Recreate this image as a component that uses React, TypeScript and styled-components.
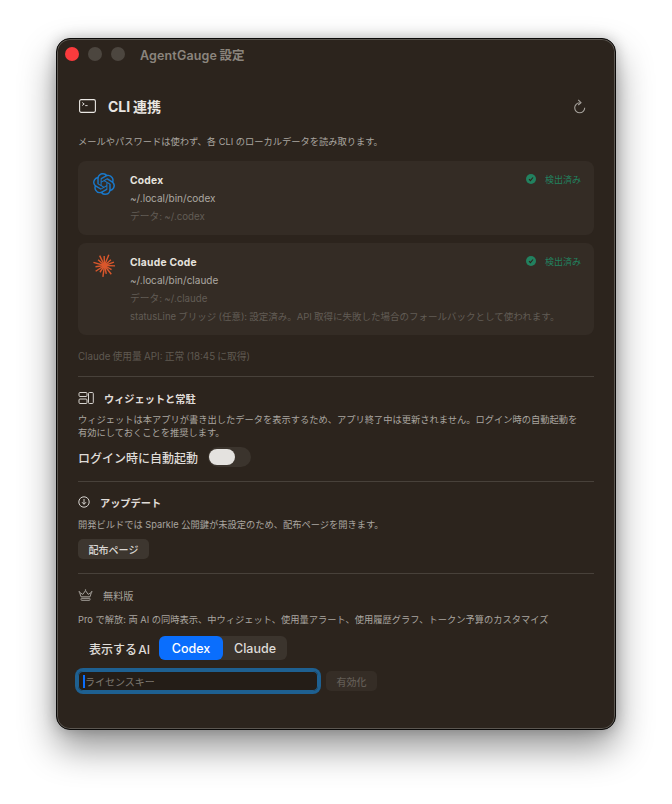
import { createGlobalStyle, styled } from "styled-components";
import { SiOpenai } from "react-icons/si";

const GlobalStyle = createGlobalStyle`
  html, body {
    margin: 0;
    padding: 0;
    background: #ffffff;
  }
  body {
    font-family: "Inter", "Noto Sans CJK JP", sans-serif;
    -webkit-font-smoothing: antialiased;
  }
`;

const Page = styled.div`
  width: 672px;
  height: 804px;
  padding: 38px 0 0 56px;
  box-sizing: border-box;
  overflow: hidden;
`;

const Window = styled.div`
  width: 560px;
  height: 692px;
  box-sizing: border-box;
  background: #2c241d;
  border-radius: 14px;
  border: 1px solid #0b0a09;
  box-shadow: inset 0 0 0 1px #5c5751, 0 18px 36px rgba(0, 0, 0, 0.42), 0 0 14px rgba(0, 0, 0, 0.22);
`;

const TitleBar = styled.div`
  display: flex;
  align-items: center;
  height: 30px;
  padding-left: 8px;
`;

const Light = styled.span<{ $color: string }>`
  width: 14px;
  height: 14px;
  border-radius: 50%;
  background: ${(p) => p.$color};
  margin-right: 9px;
`;

const WindowTitle = styled.span`
  margin-left: 6px;
  font-size: 12.5px;
  font-weight: 600;
  word-spacing: -1px;
  letter-spacing: 0.15px;
  color: #8b857d;
`;

const Content = styled.div`
  padding: 25px 21px 0 21px;
`;

const MainHead = styled.div`
  display: flex;
  align-items: center;
  height: 24px;
  padding-left: 1px;
  color: #ebe8e4;
`;

const MainTitle = styled.h1`
  margin: 0 0 0 12px;
  font-size: 14px;
  font-weight: 700;
  word-spacing: -0.5px;
  color: #e8e5e1;
  flex: 1;
`;

const RefreshBtn = styled.span`
  display: flex;
  margin-right: 7px;
  color: #a5a19b;
`;

const Desc = styled.p<{ $mt?: number }>`
  margin: ${(p) => p.$mt ?? 0}px 0 0;
  font-size: 9.25px;
  line-height: 13px;
  white-space: nowrap;
  color: #aaa6a0;
`;

const CardList = styled.div`
  display: flex;
  flex-direction: column;
  gap: 8px;
  margin-top: 13px;
`;

const Card = styled.div`
  position: relative;
  display: flex;
  background: #342c25;
  border-radius: 8px;
  padding: 10px 13px 10px 15px;
`;

const CardLogo = styled.div<{ $top: number }>`
  width: 37px;
  flex: none;
  padding-top: ${(p) => p.$top}px;
`;

const CardBody = styled.div`
  flex: 1;
`;

const CardName = styled.div`
  font-size: 10.25px;
  font-weight: 700;
  line-height: 18px;
  letter-spacing: 0.25px;
  color: #e6e3df;
`;

const CardPath = styled.div`
  font-size: 10px;
  line-height: 18px;
  color: #aca8a2;
`;

const CardMuted = styled.div<{ $small?: boolean }>`
  padding-top: 1px;
  margin-bottom: -1px;
  font-size: ${(p) => (p.$small ? 9.5 : 9.75)}px;
  line-height: 18px;
  word-spacing: -0.5px;
  white-space: nowrap;
  color: #625c55;
`;

const Status = styled.div`
  position: absolute;
  top: 10px;
  right: 13px;
  display: flex;
  align-items: flex-start;
  gap: 9px;
  font-size: 9px;
  line-height: 18px;
  color: #22815f;
`;

const Check = styled.svg`
  margin-top: 3px;
`;

const ApiNote = styled.div`
  padding-top: 1px;
  margin: 13px 0 -1px;
  font-size: 9.75px;
  line-height: 16px;
  word-spacing: -0.5px;
  color: #5f5951;
`;

const Divider = styled.hr<{ $mt: number }>`
  margin: ${(p) => p.$mt}px 0 0;
  border: 0;
  height: 1px;
  background: #48413a;
`;

const SectionHead = styled.div<{ $gap: number; $mt: number }>`
  display: flex;
  align-items: center;
  gap: ${(p) => p.$gap}px;
  height: 18px;
  margin-top: ${(p) => p.$mt}px;
  color: #d6d3cf;
`;

const SectionTitle = styled.h2<{ $dim?: boolean }>`
  margin: 0;
  font-size: 10.2px;
  font-weight: ${(p) => (p.$dim ? 400 : 700)};
  color: ${(p) => (p.$dim ? "#a5a19b" : "#e0ddd9")};
`;

const ToggleRow = styled.div`
  display: flex;
  align-items: center;
  gap: 10px;
  margin-top: 8px;
  height: 20px;
  font-size: 12px;
  font-weight: 500;
  color: #dfdcd8;
`;

const Toggle = styled.span`
  display: flex;
  align-items: center;
  width: 43px;
  height: 20px;
  padding-left: 1px;
  box-sizing: border-box;
  border-radius: 10px;
  background: #3b342d;
`;

const Knob = styled.span`
  width: 26px;
  height: 16px;
  border-radius: 8px;
  background: #e4e2df;
`;

const PlainButton = styled.button`
  display: block;
  margin-top: 8px;
  height: 20px;
  width: 71px;
  padding: 0;
  border: 0;
  border-radius: 5px;
  background: #3d362f;
  color: #dcd9d5;
  font-family: inherit;
  font-size: 10px;
  font-weight: 500;
`;

const PickerRow = styled.div`
  display: flex;
  align-items: center;
  margin-top: 10px;
  padding-left: 11px;
  height: 24px;
`;

const PickerLabel = styled.span`
  width: 70px;
  font-size: 12px;
  font-weight: 500;
  word-spacing: -2px;
  color: #dfdcd8;
`;

const Segments = styled.div`
  display: flex;
  height: 24px;
  width: 128px;
  border-radius: 6px;
  background: #3b342d;
`;

const Segment = styled.button<{ $on?: boolean }>`
  flex: ${(p) => (p.$on ? "0 0 64px" : "1")};
  padding: 0;
  border: 0;
  border-radius: 6px;
  background: ${(p) => (p.$on ? "#0a6efd" : "transparent")};
  color: ${(p) => (p.$on ? "#ffffff" : "#dfdcd8")};
  font-family: inherit;
  font-size: 12.5px;
  font-weight: 500;
`;

const LicenseRow = styled.div`
  display: flex;
  align-items: center;
  gap: 8px;
  margin-top: 11px;
`;

const LicenseBox = styled.div`
  position: relative;
  display: flex;
  align-items: center;
  width: 240px;
  height: 20px;
  box-sizing: border-box;
  padding-left: 7px;
  border-radius: 5px;
  background: #241d17;
  box-shadow: 0 0 0 3px #1e6091, inset 0 0 0 1px #1e6091;
  font-size: 10px;
  color: #7d7870;
`;

const Caret = styled.span`
  position: absolute;
  left: 5px;
  top: 4px;
  width: 2px;
  height: 13px;
  background: #0a6efd;
`;

const ActivateButton = styled.button`
  width: 51px;
  height: 20px;
  padding: 0;
  border: 0;
  border-radius: 5px;
  background: #352d26;
  color: #625c55;
  font-family: inherit;
  font-size: 10px;
  font-weight: 500;
`;

const rays = [
  [2, 11], [30, 8.5], [52, 11.5], [78, 9], [98, 12], [124, 8.5], [147, 11], [172, 9.5],
  [196, 12], [222, 9], [244, 11.5], [268, 10], [292, 12], [318, 9], [340, 10.5],
];

const ClaudeMark = () => (
  <svg width="23" height="23" viewBox="0 0 24 24">
    {rays.map(([a, len]) => (
      <line
        key={a}
        x1="12"
        y1="12"
        x2={12 + len * Math.cos((a * Math.PI) / 180)}
        y2={12 + len * Math.sin((a * Math.PI) / 180)}
        stroke="#d9572c"
        strokeWidth="1.5"
      />
    ))}
    <circle cx="12" cy="12" r="2.8" fill="#d9572c" />
  </svg>
);

const CheckBadge = () => (
  <Check width="10" height="10" viewBox="0 0 10 10">
    <circle cx="5" cy="5" r="5" fill="#22815f" />
    <path d="M3 5.2 4.4 6.6 7 3.5" fill="none" stroke="#2c241d" strokeWidth="1.1" />
  </Check>
);

export default function App() {
  return (
    <Page>
      <GlobalStyle />
      <Window>
        <TitleBar>
          <Light $color="#fb3b3d" />
          <Light $color="#4c463f" />
          <Light $color="#4c463f" />
          <WindowTitle>AgentGauge 設定</WindowTitle>
        </TitleBar>
        <Content>
          <MainHead>
            <svg width="17" height="14" viewBox="0 0 17 14" fill="none" stroke="currentColor">
              <rect x="0.6" y="0.6" width="15.8" height="12.8" rx="1.6" strokeWidth="1.1" />
              <path d="M3.2 3.5 5.2 5 3.2 6.5M6.2 6.6H8.6" strokeWidth="0.9" />
            </svg>
            <MainTitle>CLI 連携</MainTitle>
            <RefreshBtn>
              <svg width="14" height="16" viewBox="0 0 14 16" fill="none" stroke="currentColor" strokeWidth="1.1">
                <path d="M11.7 9.8A5 5 0 1 1 6.7 4.8" />
                <path d="M5.2 1.8 8 4.7 5.2 7" />
              </svg>
            </RefreshBtn>
          </MainHead>
          <Desc $mt={17}>メールやパスワードは使わず、各 CLI のローカルデータを読み取ります。</Desc>

          <CardList>
            <Card>
              <CardLogo $top={2}>
                <SiOpenai size={22} color="#1a78c9" />
              </CardLogo>
              <CardBody>
                <CardName>Codex</CardName>
                <CardPath>~/.local/bin/codex</CardPath>
                <CardMuted>データ: ~/.codex</CardMuted>
              </CardBody>
              <Status>
                <CheckBadge />
                検出済み
              </Status>
            </Card>

            <Card>
              <CardLogo $top={1}>
                <ClaudeMark />
              </CardLogo>
              <CardBody>
                <CardName>Claude Code</CardName>
                <CardPath>~/.local/bin/claude</CardPath>
                <CardMuted>データ: ~/.claude</CardMuted>
                <CardMuted $small>statusLine ブリッジ (任意): 設定済み。API 取得に失敗した場合のフォールバックとして使われます。</CardMuted>
              </CardBody>
              <Status>
                <CheckBadge />
                検出済み
              </Status>
            </Card>
          </CardList>

          <ApiNote>Claude 使用量 API: 正常 (18:45 に取得)</ApiNote>
          <Divider $mt={12} />

          <SectionHead $gap={10} $mt={12}>
            <svg width="16" height="12" viewBox="0 0 16 12" fill="none" stroke="currentColor" strokeWidth="1">
              <rect x="1" y="0.5" width="8" height="4" rx="1" />
              <rect x="1" y="7" width="8" height="4.5" rx="1" />
              <rect x="10.5" y="0.5" width="4.8" height="11" rx="1" />
            </svg>
            <SectionTitle>ウィジェットと常駐</SectionTitle>
          </SectionHead>
          <Desc $mt={6}>
            ウィジェットは本アプリが書き出したデータを表示するため、アプリ終了中は更新されません。ログイン時の自動起動を
            <br />
            有効にしておくことを推奨します。
          </Desc>
          <ToggleRow>
            ログイン時に自動起動
            <Toggle>
              <Knob />
            </Toggle>
          </ToggleRow>
          <Divider $mt={14} />

          <SectionHead $gap={10} $mt={11}>
            <svg width="12" height="12" viewBox="0 0 12 12" fill="none" stroke="currentColor" strokeWidth="1">
              <circle cx="6" cy="6" r="5.2" />
              <path d="M6 3v5.2M4 6.2 6 8.3 8 6.2" />
            </svg>
            <SectionTitle>アップデート</SectionTitle>
          </SectionHead>
          <Desc $mt={7}>開発ビルドでは Sparkle 公開鍵が未設定のため、配布ページを開きます。</Desc>
          <PlainButton>配布ページ</PlainButton>
          <Divider $mt={14} />

          <SectionHead $gap={10} $mt={12}>
            <svg width="15" height="12" viewBox="0 0 15 12" fill="none" stroke="#a5a19b" strokeWidth="1">
              <path d="M3 7.8 1.6 3.4 4.8 5.4 7.5 1.6 10.2 5.4 13.4 3.4 12 7.8z" />
              <rect x="3" y="9.3" width="9" height="2" rx="0.6" />
              <circle cx="7.5" cy="1" r="0.7" fill="#a5a19b" stroke="none" />
              <circle cx="1.2" cy="2.8" r="0.7" fill="#a5a19b" stroke="none" />
              <circle cx="13.8" cy="2.8" r="0.7" fill="#a5a19b" stroke="none" />
            </svg>
            <SectionTitle $dim>無料版</SectionTitle>
          </SectionHead>
          <Desc $mt={9}>Pro で解放: 両 AI の同時表示、中ウィジェット、使用量アラート、使用履歴グラフ、トークン予算のカスタマイズ</Desc>

          <PickerRow>
            <PickerLabel>表示する AI</PickerLabel>
            <Segments>
              <Segment $on>Codex</Segment>
              <Segment>Claude</Segment>
            </Segments>
          </PickerRow>

          <LicenseRow>
            <LicenseBox>
              <Caret />
              ライセンスキー
            </LicenseBox>
            <ActivateButton>有効化</ActivateButton>
          </LicenseRow>
        </Content>
      </Window>
    </Page>
  );
}
